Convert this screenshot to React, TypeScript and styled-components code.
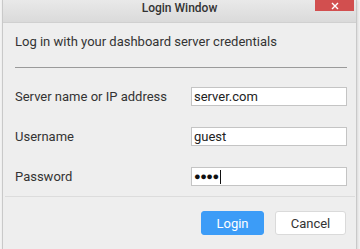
import styled, { createGlobalStyle } from 'styled-components';

const GlobalStyle = createGlobalStyle`
  html, body {
    margin: 0;
    padding: 0;
    background: #f4f4f4;
    font-family: Roboto, "Liberation Sans", sans-serif;
    overflow: hidden;
  }
`;

const Window = styled.div`
  margin-left: 2px;
  width: 353px;
  height: 260px;
  background: #eeeeee;
  border-left: 1px solid #c9c9c9;
  border-right: 1px solid #c9c9c9;
  box-shadow: 1px 0 3px rgba(0, 0, 0, 0.12);
`;

const TitleBar = styled.div`
  display: grid;
  grid-template-columns: 1fr auto 1fr;
  height: 22px;
  background: linear-gradient(#e9e9e9, #dadada);
  border-bottom: 1px solid #d0d0d0;
`;

const Title = styled.div`
  grid-column: 2;
  font-size: 12px;
  font-weight: 500;
  color: #333;
  line-height: 16px;
`;

const CloseButton = styled.button`
  grid-column: 3;
  justify-self: end;
  align-self: start;
  width: 39px;
  height: 11px;
  margin-right: 2px;
  padding: 0;
  border: none;
  background: #d24f4f;
  display: flex;
  align-items: center;
  justify-content: center;
`;

const Body = styled.div`
  padding: 11px 9px 0 12px;
`;

const Intro = styled.p`
  margin: 0;
  font-size: 13px;
  line-height: 16px;
  color: #333;
`;

const Rule = styled.hr`
  margin: 17px 0 0;
  border: none;
  border-top: 1px solid #9a9a9a;
`;

const Form = styled.div`
  display: flex;
  flex-direction: column;
  gap: 21px;
  padding-top: 19px;
`;

const Row = styled.div`
  display: grid;
  grid-template-columns: 176px 156px;
  align-items: center;
`;

const Label = styled.label`
  font-size: 13px;
  color: #333;
`;

const Field = styled.input`
  box-sizing: border-box;
  height: 19px;
  width: 156px;
  padding: 0 2px;
  border: 1px solid #c4c4c4;
  background: #fff;
  font-family: Roboto, "Liberation Sans", sans-serif;
  font-size: 13px;
  color: #222;
  outline: none;
`;

const PasswordBox = styled.div`
  box-sizing: border-box;
  height: 19px;
  width: 156px;
  padding: 0 2px;
  border: 1px solid #c4c4c4;
  background: #fff;
  display: flex;
  align-items: center;
`;

const Dots = styled.span`
  font-size: 11px;
  letter-spacing: -0.5px;
  color: #111;
  line-height: 1;
`;

const Caret = styled.span`
  width: 1px;
  height: 14px;
  margin-left: 1px;
  background: #111;
`;

const Footer = styled.div`
  margin-top: 10px;
  border-top: 1px solid #dcdcdc;
  margin-left: 2px;
  margin-right: 1px;
  display: flex;
  justify-content: flex-end;
  gap: 11px;
  padding: 14px 9px 0 0;
`;

const Button = styled.button<{ $primary?: boolean }>`
  height: 24px;
  padding: 0;
  width: ${(p) => (p.$primary ? '63px' : '71px')};
  border-radius: 3px;
  border: 1px solid ${(p) => (p.$primary ? '#3c9cf7' : '#dadada')};
  background: ${(p) => (p.$primary ? '#3c9cf7' : '#fff')};
  color: ${(p) => (p.$primary ? '#fff' : '#333')};
  font-family: Roboto, "Liberation Sans", sans-serif;
  font-size: 13px;
`;

export default function App() {
  return (
    <>
      <GlobalStyle />
      <Window>
        <TitleBar>
          <Title>Login Window</Title>
          <CloseButton aria-label="Close">
            <svg width="8" height="8" viewBox="0 0 8 8">
              <path d="M1 1 L7 7 M7 1 L1 7" stroke="#fff" strokeWidth="1.4" />
            </svg>
          </CloseButton>
        </TitleBar>
        <Body>
          <Intro>Log in with your dashboard server credentials</Intro>
          <Rule />
          <Form>
            <Row>
              <Label>Server name or IP address</Label>
              <Field defaultValue="server.com" />
            </Row>
            <Row>
              <Label>Username</Label>
              <Field defaultValue="guest" />
            </Row>
            <Row>
              <Label>Password</Label>
              <PasswordBox>
                <Dots>●●●●</Dots>
                <Caret />
              </PasswordBox>
            </Row>
          </Form>
        </Body>
        <Footer>
          <Button $primary>Login</Button>
          <Button>Cancel</Button>
        </Footer>
      </Window>
    </>
  );
}
